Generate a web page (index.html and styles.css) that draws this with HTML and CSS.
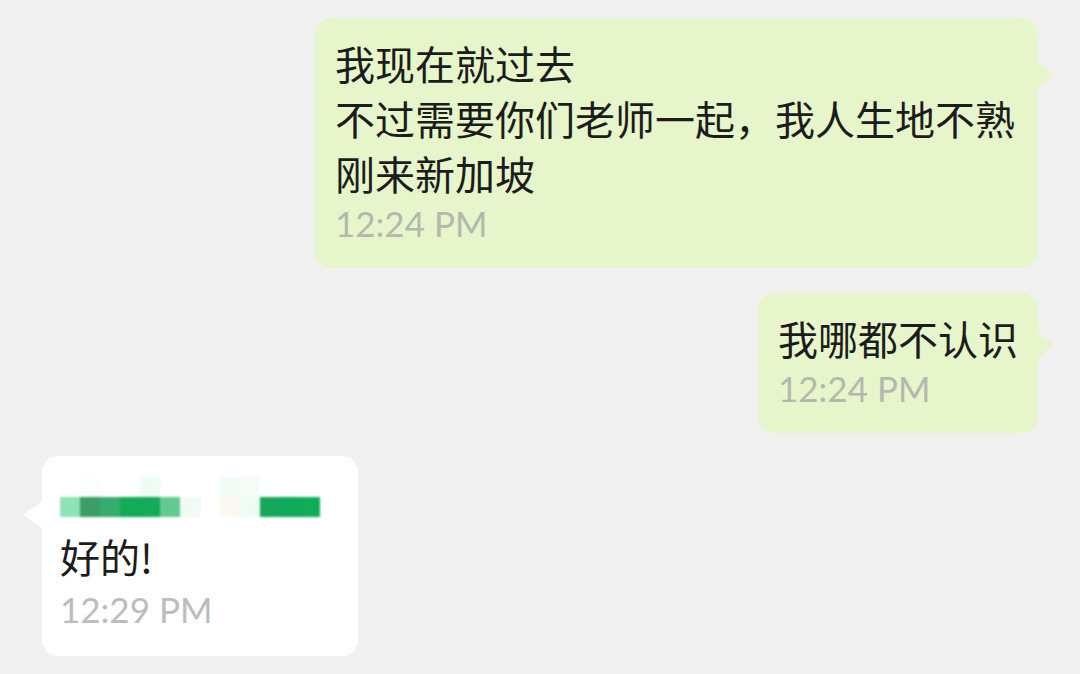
FILE: index.html
```html
<!DOCTYPE html>
<html>
<head>
  <meta charset="utf-8">
  <title>Chat</title>
  <link rel="stylesheet" href="styles.css">
</head>
<body>
  <div class="chat">
    <div class="row row-out first">
      <div class="bubble out tail-right wide">
        <div class="msg">我现在就过去<br>不过需要你们老师一起，我人生地不熟<br>刚来新加坡</div>
        <div class="time">12:24 PM</div>
      </div>
    </div>

    <div class="row row-out second">
      <div class="bubble out tail-right short">
        <div class="msg">我哪都不认识</div>
        <div class="time">12:24 PM</div>
      </div>
    </div>

    <div class="row row-in third">
      <div class="bubble in tail-left">
        <div class="name">
          <div class="px-row">
            <span class="px" style="background:#ffffff"></span>
            <span class="px" style="background:#fbfefc"></span>
            <span class="px" style="background:#ffffff"></span>
            <span class="px" style="background:#ffffff"></span>
            <span class="px" style="background:#eefcf5"></span>
            <span class="px" style="background:#ffffff"></span>
            <span class="px" style="background:#ffffff"></span>
            <span class="px" style="background:#ffffff"></span>
            <span class="px" style="background:#f1fcf6"></span>
            <span class="px" style="background:#f4fcf7"></span>
            <span class="px" style="background:#ffffff"></span>
            <span class="px" style="background:#ffffff"></span>
            <span class="px" style="background:#ffffff"></span>
          </div>
          <div class="px-row">
            <span class="px" style="background:#8fe2b6"></span>
            <span class="px" style="background:#3c9d69"></span>
            <span class="px" style="background:#36ad6c"></span>
            <span class="px" style="background:#10ac57"></span>
            <span class="px" style="background:#14ab59"></span>
            <span class="px" style="background:#62ca90"></span>
            <span class="px" style="background:#effbf4"></span>
            <span class="px" style="background:#ffffff"></span>
            <span class="px" style="background:#fdf8ef"></span>
            <span class="px" style="background:#eefcf4"></span>
            <span class="px" style="background:#17a75c"></span>
            <span class="px" style="background:#11a95a"></span>
            <span class="px" style="background:#10ad59"></span>
          </div>
        </div>
        <div class="msg">好的!</div>
        <div class="time">12:29 PM</div>
      </div>
    </div>
  </div>
</body>
</html>
```

FILE: styles.css
```css
body {
  margin: 0;
  background-color: #f0f0f0;
  font-family: "Noto Sans CJK SC", "Noto Sans", sans-serif;
}

.chat {
  display: flex;
  flex-direction: column;
  padding: 18px 42px 0 42px;
}

.row {
  display: flex;
}

.row-out {
  justify-content: flex-end;
}

.row-in {
  justify-content: flex-start;
}

.second {
  margin-top: 25px;
}

.third {
  margin-top: 23px;
}

.bubble {
  position: relative;
  padding: 18px 20px 23px 20px;
  border-radius: 16px;
}

.wide {
  padding-right: 23px;
}

.out {
  background-color: #e7f5ca;
}

.in {
  background-color: #ffffff;
  width: 278px;
  padding: 20px 20px 25px 18px;
}

.msg {
  font-size: 40px;
  line-height: 55px;
  color: #1c1c1c;
  white-space: nowrap;
}

.time {
  font-family: Lato, "Open Sans", sans-serif;
  font-size: 35px;
  line-height: 44px;
  color: #b5b8ae;
}

.in .time {
  color: #bcbcbc;
  margin-top: 3px;
}

/* tails */
.tail-right::after {
  content: "";
  position: absolute;
  right: -16px;
  top: 43px;
  border-top: 14px solid transparent;
  border-bottom: 14px solid transparent;
  border-left: 17px solid #e7f5ca;
}

.short.tail-right::after {
  top: 38px;
}

.tail-left::after {
  content: "";
  position: absolute;
  left: -19px;
  top: 45px;
  border-top: 14px solid transparent;
  border-bottom: 14px solid transparent;
  border-right: 20px solid #ffffff;
}

/* blurred name */
.name {
  height: 53px;
  display: flex;
  flex-direction: column;
  justify-content: flex-end;
  padding-bottom: 12px;
  box-sizing: border-box;
  filter: blur(0.8px);
}

.px-row {
  display: flex;
}

.px {
  display: block;
  width: 20px;
  height: 20px;
}
```
